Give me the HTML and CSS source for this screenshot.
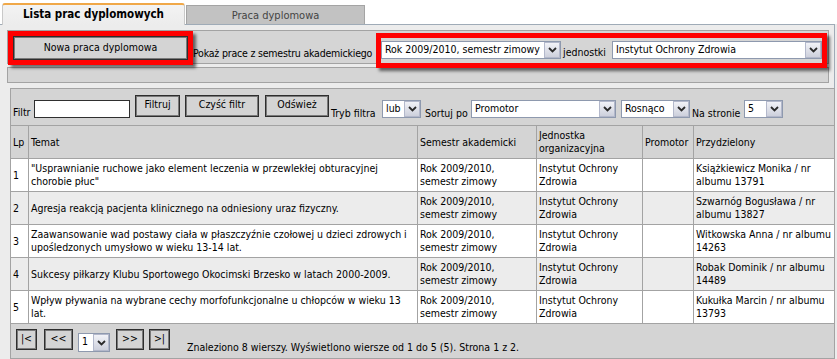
FILE: index.html
```html
<!DOCTYPE html>
<html lang="pl">
<head>
<meta charset="utf-8">
<title>Lista prac dyplomowych</title>
<link rel="stylesheet" href="styles.css">
</head>
<body>
<div class="tabs">
  <div class="tab tab-active">Lista prac dyplomowych</div>
  <div class="tab tab-inactive">Praca dyplomowa</div>
</div>
<div class="panel-top">
  <div class="toolbox">
    <div class="mark mark-new">
      <div class="btn btn-new">Nowa praca dyplomowa</div>
    </div>
    <div class="lbl lbl-semestr">Pokaż prace z semestru akademickiego</div>
    <div class="mark mark-filter">
      <div class="sel sel-sem"><span class="sel-text">Rok 2009/2010, semestr zimowy</span><span class="sel-arrow"><svg viewBox="0 0 9 6" width="9" height="6"><path d="M1 1 L4.5 4.5 L8 1" fill="none" stroke="#2a2a2a" stroke-width="1.8"/></svg></span></div>
      <div class="lbl lbl-jedn">jednostki</div>
      <div class="sel sel-jedn"><span class="sel-text">Instytut Ochrony Zdrowia</span><span class="sel-arrow"><svg viewBox="0 0 9 6" width="9" height="6"><path d="M1 1 L4.5 4.5 L8 1" fill="none" stroke="#2a2a2a" stroke-width="1.8"/></svg></span></div>
    </div>
  </div>
  <div class="bar"></div>
</div>
<div class="panel-list">
  <div class="filter">
    <div class="lbl lbl-filtr">Filtr</div>
    <div class="input"></div>
    <div class="btn btn-f w-filtruj">Filtruj</div>
    <div class="btn btn-f w-czysc">Czyść filtr</div>
    <div class="btn btn-f w-odswiez">Odśwież</div>
    <div class="lbl lbl-tryb">Tryb filtra</div>
    <div class="sel sel-lub"><span class="sel-text">lub</span><span class="sel-arrow"><svg viewBox="0 0 9 6" width="9" height="6"><path d="M1 1 L4.5 4.5 L8 1" fill="none" stroke="#2a2a2a" stroke-width="1.8"/></svg></span></div>
    <div class="lbl lbl-sort">Sortuj po</div>
    <div class="sel sel-prom"><span class="sel-text">Promotor</span><span class="sel-arrow"><svg viewBox="0 0 9 6" width="9" height="6"><path d="M1 1 L4.5 4.5 L8 1" fill="none" stroke="#2a2a2a" stroke-width="1.8"/></svg></span></div>
    <div class="sel sel-ros"><span class="sel-text">Rosnąco</span><span class="sel-arrow"><svg viewBox="0 0 9 6" width="9" height="6"><path d="M1 1 L4.5 4.5 L8 1" fill="none" stroke="#2a2a2a" stroke-width="1.8"/></svg></span></div>
    <div class="lbl lbl-na">Na stronie</div>
    <div class="sel sel-five"><span class="sel-text">5</span><span class="sel-arrow"><svg viewBox="0 0 9 6" width="9" height="6"><path d="M1 1 L4.5 4.5 L8 1" fill="none" stroke="#2a2a2a" stroke-width="1.8"/></svg></span></div>
  </div>
  <table class="grid">
    <thead>
      <tr>
        <th class="c-lp">Lp</th>
        <th class="c-temat">Temat</th>
        <th class="c-sem">Semestr akademicki</th>
        <th class="c-jedn">Jednostka<br>organizacyjna</th>
        <th class="c-prom">Promotor</th>
        <th class="c-przy">Przydzielony</th>
      </tr>
    </thead>
    <tbody>
      <tr class="odd">
        <td>1</td>
        <td>"Usprawnianie ruchowe jako element leczenia w przewlekłej obturacyjnej<br>chorobie płuc"</td>
        <td>Rok 2009/2010,<br>semestr zimowy</td>
        <td>Instytut Ochrony<br>Zdrowia</td>
        <td></td>
        <td>Książkiewicz Monika / nr<br>albumu 13791</td>
      </tr>
      <tr class="even">
        <td>2</td>
        <td>Agresja reakcją pacjenta klinicznego na odniesiony uraz fizyczny.</td>
        <td>Rok 2009/2010,<br>semestr zimowy</td>
        <td>Instytut Ochrony<br>Zdrowia</td>
        <td></td>
        <td>Szwarnóg Bogusława / nr<br>albumu 13827</td>
      </tr>
      <tr class="odd">
        <td>3</td>
        <td>Zaawansowanie wad postawy ciała w płaszczyźnie czołowej u dzieci zdrowych i<br>upośledzonych umysłowo w wieku 13-14 lat.</td>
        <td>Rok 2009/2010,<br>semestr zimowy</td>
        <td>Instytut Ochrony<br>Zdrowia</td>
        <td></td>
        <td>Witkowska Anna / nr albumu<br>14263</td>
      </tr>
      <tr class="even">
        <td>4</td>
        <td>Sukcesy piłkarzy Klubu Sportowego Okocimski Brzesko w latach 2000-2009.</td>
        <td>Rok 2009/2010,<br>semestr zimowy</td>
        <td>Instytut Ochrony<br>Zdrowia</td>
        <td></td>
        <td>Robak Dominik / nr albumu<br>14489</td>
      </tr>
      <tr class="odd">
        <td>5</td>
        <td>Wpływ pływania na wybrane cechy morfofunkcjonalne u chłopców w wieku 13<br>lat.</td>
        <td>Rok 2009/2010,<br>semestr zimowy</td>
        <td>Instytut Ochrony<br>Zdrowia</td>
        <td></td>
        <td>Kukułka Marcin / nr albumu<br>13793</td>
      </tr>
    </tbody>
  </table>
  <div class="pager">
    <div class="btn btn-p w-first">|&lt;</div>
    <div class="btn btn-p w-prev">&lt;&lt;</div>
    <div class="sel sel-page"><span class="sel-text">1</span><span class="sel-arrow"><svg viewBox="0 0 9 6" width="9" height="6"><path d="M1 1 L4.5 4.5 L8 1" fill="none" stroke="#2a2a2a" stroke-width="1.8"/></svg></span></div>
    <div class="btn btn-p w-next">&gt;&gt;</div>
    <div class="btn btn-p w-last">&gt;|</div>
    <div class="pager-info">Znaleziono 8 wierszy. Wyświetlono wiersze od 1 do 5 (5). Strona 1 z 2.</div>
  </div>
</div>
</body>
</html>
```

FILE: styles.css
```css
* { box-sizing: border-box; }

body {
  margin: 0;
  background: #ececec;
  font-family: "DejaVu Sans Condensed", "DejaVu Sans", sans-serif;
  font-stretch: condensed;
  font-size: 10.5px;
  line-height: 13px;
  color: #000;
}

/* Tabs */
.tabs {
  height: 24px;
  background: #fff;
  display: flex;
  align-items: flex-end;
  padding-left: 2px;
}
.tab { text-align: center; white-space: nowrap; }
.tab-active {
  position: relative;
  z-index: 2;
  width: 183px;
  height: 22px;
  margin-bottom: -1px;
  border-top: 2px solid #f0a848;
  border-left: 1px solid #c9c9c9;
  border-right: 1px solid #c9c9c9;
  border-radius: 3px 3px 0 0;
  background: linear-gradient(#f3f3f3, #ececec);
  font-weight: bold;
  font-size: 11.5px;
  line-height: 18px;
}
.tab-inactive {
  width: 179px;
  height: 19px;
  margin-left: 1px;
  border: 1px solid #a4a4a4;
  border-bottom: none;
  background: #c2c2c2;
  color: #444;
  font-size: 11px;
  padding-top: 3px;
  line-height: 14px;
}

/* Top panel */
.panel-top {
  position: relative;
  z-index: 1;
  width: 835px;
  border-top: 1px solid #9fabb7;
  border-right: 1px solid #9fabb7;
  padding: 5px 5px 5px 7px;
}
.toolbox {
  height: 34px;
  display: flex;
  align-items: flex-start;
  border: 1px solid #a3a3a3;
  background: #d5d5d5;
}
.mark {
  position: relative;
  z-index: 3;
  border: 5px solid #ff0000;
  box-shadow: 3px 3px 3px rgba(0, 0, 0, 0.55);
}
.mark-new {
  width: 185px;
  height: 34px;
}
.btn-new {
  width: 100%;
  height: 100%;
  border: 2px solid #3c3c3c;
  background: linear-gradient(#e2e2e2, #d2d2d2);
  line-height: 20px;
}
.lbl { white-space: nowrap; }
.lbl-semestr {
  width: 183px;
  margin-top: 16px;
  letter-spacing: -0.2px;
}
.mark-filter {
  width: 451px;
  height: 35px;
  margin-top: 2px;
  display: flex;
  align-items: flex-start;
  background: #d5d5d5;
}
.lbl-jedn {
  width: 49px;
  margin-left: 2px;
  margin-top: 8px;
}
.sel-sem { width: 180px; margin-top: 3px; }
.sel-jedn { width: 210px; margin-top: 3px; }

.bar {
  height: 16px;
  margin-top: 3px;
  border: 1px solid #a3a3a3;
  background: #d5d5d5;
}

/* Generic controls */
.btn {
  text-align: center;
  white-space: nowrap;
  background: #d4d4d4;
  border: 1px solid #2e2e2e;
  box-shadow: inset 0 0 0 1px #7a7a7a;
}
.sel {
  display: flex;
  height: 18px;
  border: 1px solid #8e99ae;
  background: #fff;
  white-space: nowrap;
}
.sel-text {
  flex: 1;
  padding-left: 3px;
  line-height: 15px;
  overflow: hidden;
}
.sel-arrow {
  width: 16px;
  display: flex;
  align-items: center;
  justify-content: center;
  border: 1px solid #b3b8cb;
  background: linear-gradient(#f1f2f7, #cdd0dc);
}

/* List panel */
.panel-list {
  width: 825px;
  margin-left: 10px;
  border: 1px solid #a3a3a3;
  background: #d4d4d4;
}
.filter {
  height: 36px;
  display: flex;
  align-items: flex-start;
  padding: 6px 0 0 2px;
}
.filter .lbl { margin-top: 12px; }
.filter .lbl-filtr { width: 21px; margin-top: 11px; }
.input {
  width: 96px;
  height: 18px;
  margin-top: 5px;
  border: 1px solid #2f2f2f;
  background: #fff;
}
.btn-f {
  height: 22px;
  padding-top: 2px;
}
.w-filtruj { width: 45px; margin-left: 5px; }
.w-czysc { width: 74px; margin-left: 5px; }
.w-odswiez { width: 64px; margin-left: 6px; }
.lbl-tryb { width: 51px; margin-left: 2px; }
.lbl-sort { width: 46px; margin-left: 4px; }
.lbl-na { width: 52px; margin-left: 2px; }
.filter .sel { margin-top: 5px; }
.sel-lub { width: 39px; }
.sel-prom { width: 145px; }
.sel-ros { width: 69px; margin-left: 5px; }
.sel-five { width: 39px; }

/* Table */
.grid {
  width: 823px;
  table-layout: fixed;
  border-spacing: 0;
}
.grid th, .grid td {
  border-top: 1px solid #a3a3a3;
  border-right: 1px solid #a3a3a3;
  padding: 3px 2px;
  text-align: left;
  font-weight: normal;
  vertical-align: middle;
  white-space: nowrap;
  overflow: hidden;
}
.grid th:last-child, .grid td:last-child { border-right: none; }
.grid th { height: 33px; }
.grid td { height: 33px; }
.c-lp { width: 18px; }
.c-temat { width: 389px; }
.c-sem { width: 119px; }
.c-jedn { width: 106px; }
.c-prom { width: 51px; }
.c-przy { width: 140px; }
.odd td { background: #fff; }
.even td { background: #ececec; }

/* Pager */
.pager {
  height: 35px;
  display: flex;
  align-items: flex-start;
  border-top: 1px solid #a3a3a3;
  padding: 5px 0 0 5px;
}
.btn-p {
  height: 21px;
  padding-top: 2px;
}
.w-first { width: 21px; }
.w-prev { width: 29px; margin-left: 7px; }
.sel-page { width: 32px; height: 19px; margin-top: 4px; margin-left: 5px; }
.w-next { width: 28px; margin-left: 6px; }
.w-last { width: 21px; margin-left: 5px; }
.pager-info {
  margin-left: 17px;
  margin-top: 12px;
  white-space: nowrap;
}
```
